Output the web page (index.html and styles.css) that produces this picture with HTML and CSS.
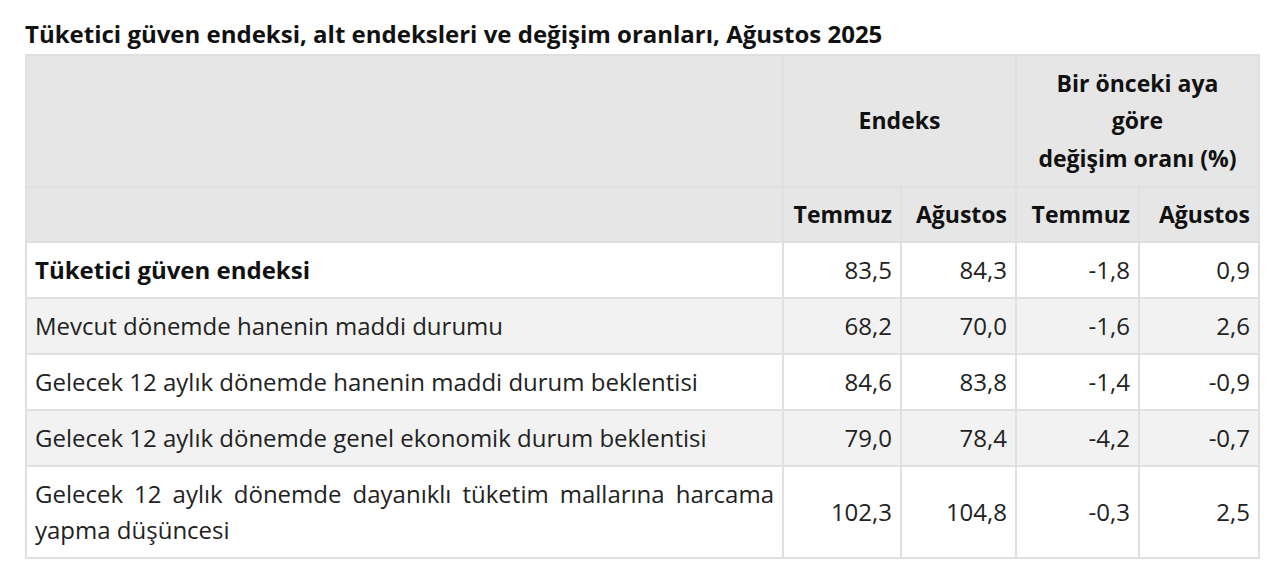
FILE: index.html
```html
<!DOCTYPE html>
<html lang="tr">
<head>
<meta charset="utf-8">
<title>Tüketici güven endeksi</title>
<link rel="stylesheet" href="styles.css">
</head>
<body>
<div class="wrap">
  <h2 class="title">Tüketici güven endeksi, alt endeksleri ve değişim oranları, Ağustos 2025</h2>
  <table class="data">
    <colgroup>
      <col class="c-label">
      <col class="c-num1">
      <col class="c-num2">
      <col class="c-num3">
      <col class="c-num4">
    </colgroup>
    <thead>
      <tr class="h1">
        <th></th>
        <th colspan="2">Endeks</th>
        <th colspan="2">Bir önceki aya<br>göre<br>değişim oranı (%)</th>
      </tr>
      <tr class="h2">
        <th></th>
        <th>Temmuz</th>
        <th>Ağustos</th>
        <th>Temmuz</th>
        <th>Ağustos</th>
      </tr>
    </thead>
    <tbody>
      <tr>
        <td class="lbl strong">Tüketici güven endeksi</td>
        <td class="num">83,5</td><td class="num">84,3</td><td class="num">-1,8</td><td class="num">0,9</td>
      </tr>
      <tr class="alt">
        <td class="lbl">Mevcut dönemde hanenin maddi durumu</td>
        <td class="num">68,2</td><td class="num">70,0</td><td class="num">-1,6</td><td class="num">2,6</td>
      </tr>
      <tr>
        <td class="lbl">Gelecek 12 aylık dönemde hanenin maddi durum beklentisi</td>
        <td class="num">84,6</td><td class="num">83,8</td><td class="num">-1,4</td><td class="num">-0,9</td>
      </tr>
      <tr class="alt">
        <td class="lbl">Gelecek 12 aylık dönemde genel ekonomik durum beklentisi</td>
        <td class="num">79,0</td><td class="num">78,4</td><td class="num">-4,2</td><td class="num">-0,7</td>
      </tr>
      <tr>
        <td class="lbl">Gelecek 12 aylık dönemde dayanıklı tüketim mallarına harcama yapma düşüncesi</td>
        <td class="num">102,3</td><td class="num">104,8</td><td class="num">-0,3</td><td class="num">2,5</td>
      </tr>
    </tbody>
  </table>
</div>
</body>
</html>
```

FILE: styles.css
```css
html, body {
  margin: 0;
  padding: 0;
  background: #ffffff;
}
body {
  font-family: "Open Sans", "Noto Sans", sans-serif;
  color: #222;
}
.wrap {
  padding: 18px 22px 0 25px;
}
.title {
  margin: 0 0 4px 0;
  font-size: 24px;
  font-weight: 700;
  line-height: 32px;
  color: #111;
}
.data {
  border-collapse: collapse;
  width: 1233px;
  table-layout: fixed;
  font-size: 24px;
  line-height: 36px;
}
.c-label { width: 757px; }
.c-num1 { width: 118px; }
.c-num2 { width: 115px; }
.c-num3 { width: 123px; }
.c-num4 { width: 120px; }
.data th, .data td {
  border: 2px solid #e0e0e0;
  padding: 9px 8px;
}
.data thead th {
  background: #e6e6e6;
  font-weight: 700;
  font-size: 23px;
  text-align: center;
  color: #111;
  vertical-align: middle;
}
.data thead tr.h1 th {
  line-height: 37.33px;
}
.data thead tr.h2 th {
  line-height: 35px;
  text-align: right;
}
.data tbody td {
  background: #ffffff;
  vertical-align: middle;
}
.data tbody tr.alt td {
  background: #f2f2f2;
}
.lbl {
  text-align: justify;
  color: #222;
}
.lbl.strong {
  font-weight: 700;
  color: #111;
}
.num {
  text-align: right;
}
```
